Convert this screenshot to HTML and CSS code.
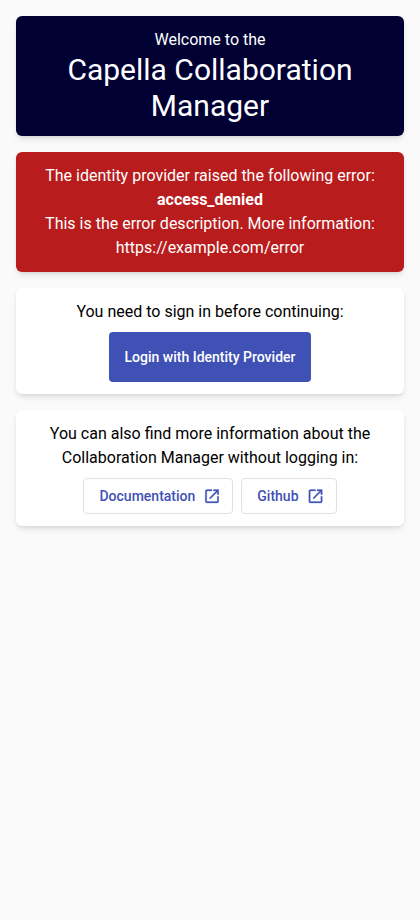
FILE: index.html
```html
<!DOCTYPE html>
<html lang="en">
<head>
<meta charset="utf-8">
<title>Capella Collaboration Manager</title>
<link rel="stylesheet" href="styles.css">
</head>
<body>
<main class="page">
  <header class="card card-primary">
    <div>Welcome to the</div>
    <h1 class="title">Capella Collaboration Manager</h1>
  </header>
  <section class="card card-error">
    The identity provider raised the following error:<br>
    <b>access_denied</b><br>
    This is the error description. More information: https://example.com/error
  </section>
  <section class="card">
    <div>You need to sign in before continuing:</div>
    <button class="login">Login with Identity Provider</button>
  </section>
  <section class="card">
    <div>You can also find more information about the Collaboration Manager without logging in:</div>
    <div class="links">
      <a class="link">Documentation
        <svg class="icon" viewBox="0 -0.33 24 24"><path d="M5 21q-.825 0-1.413-.587T3 19V5q0-.825.588-1.412T5 3h7v2H5v14h14v-7h2v7q0 .825-.587 1.413T19 21H5Zm4.700-5.300-1.400-1.400L17.600 5H14V3h7v7h-2V6.400l-9.300 9.300Z"/></svg>
      </a>
      <a class="link">Github
        <svg class="icon" viewBox="0.6 -0.33 24 24"><path d="M5 21q-.825 0-1.413-.587T3 19V5q0-.825.588-1.412T5 3h7v2H5v14h14v-7h2v7q0 .825-.587 1.413T19 21H5Zm4.700-5.300-1.400-1.400L17.600 5H14V3h7v7h-2V6.400l-9.300 9.300Z"/></svg>
      </a>
    </div>
  </section>
</main>
</body>
</html>
```
FILE: styles.css
```css
* { box-sizing: border-box; }
body {
  margin: 0;
  background: #fafafa;
  color: #000;
  font: 400 16px/24px Roboto, sans-serif;
}
.page {
  display: flex;
  flex-direction: column;
  gap: 16px;
  padding: 16px;
}
.card {
  padding: 12px 16px;
  border-radius: 6px;
  background: #fff;
  text-align: center;
  box-shadow: 0 4px 6px -1px rgba(0, 0, 0, .1), 0 2px 4px -2px rgba(0, 0, 0, .1);
}
.card-primary { background: #003; color: #fff; }
.card-error { background: #b91c1c; color: #fff; }
.title {
  margin: 0;
  font-size: 30px;
  line-height: 36px;
  font-weight: 400;
}
.login {
  display: block;
  height: 50px;
  margin: 8px auto 0;
  padding: 0 16px;
  border: 0;
  border-radius: 4px;
  background: #3f51b5;
  color: #fff;
  font: 500 14px/20px Roboto, sans-serif;
}
.links {
  display: flex;
  justify-content: center;
  gap: 8px;
  margin-top: 8px;
}
.link {
  display: flex;
  align-items: center;
  gap: 8px;
  height: 36px;
  padding: 0 11px 0 15px;
  border: 1px solid #e0e0e0;
  border-radius: 4px;
  color: #3f51b5;
  font-size: 14px;
  font-weight: 500;
}
.icon {
  width: 18px;
  height: 18px;
  fill: currentColor;
  stroke: currentColor;
  stroke-width: .3;
}
```
